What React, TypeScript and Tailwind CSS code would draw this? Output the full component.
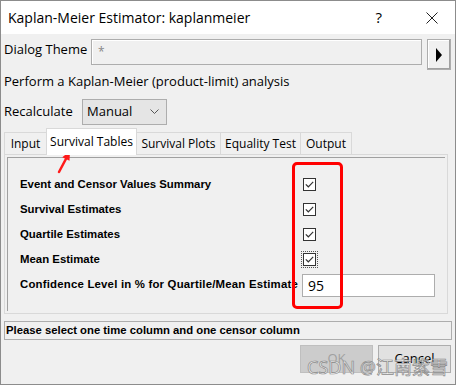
const Check = ({ focus }: { focus?: boolean }) => (
  <div className={focus ? "p-[1px] border border-dotted border-[#555]" : "p-[2px]"}>
    <div className="w-[13px] h-[13px] border border-[#333] bg-white flex items-center justify-center">
      <svg width="9" height="7" viewBox="0 0 9 7">
        <path d="M0.8 3.4 L3.3 5.8 L8.2 0.8" fill="none" stroke="#333" strokeWidth="1.2" />
      </svg>
    </div>
  </div>
);

const tabs = ["Input", "Survival Tables", "Survival Plots", "Equality Test", "Output"];
const tabWidths = ["w-[43px]", "w-[91px]", "w-[85px]", "w-[81px]", "w-[52px]"];

const rows = ["Event and Censor Values Summary", "Survival Estimates", "Quartile Estimates", "Mean Estimate"];

export default function App() {
  return (
    <div className="w-[459px] h-[385px] bg-white relative overflow-hidden font-['Open_Sans',sans-serif] text-[#000] whitespace-nowrap">
      <div className="w-[456px] h-[385px] border border-[#8c8c8c] bg-[#f0f0f0] flex flex-col">
        {/* title bar */}
        <div className="h-[33px] bg-white flex items-center pl-[7px] shrink-0">
          <span className="text-[14px]">Kaplan-Meier Estimator: kaplanmeier</span>
          <span className="ml-auto text-[15px] mr-[44px]">?</span>
          <svg width="12" height="12" viewBox="0 0 12 12" className="mr-[17px]">
            <path d="M0.5 0.5 L11.5 11.5 M11.5 0.5 L0.5 11.5" stroke="#222" strokeWidth="1" />
          </svg>
        </div>

        {/* dialog theme */}
        <div className="mt-[5px] h-[31px] flex items-start pl-[3px] shrink-0">
          <span className="w-[87px] text-[13px] leading-[20px]">Dialog Theme</span>
          <div className="w-[331px] h-[26px] border border-[#adadad] shadow-[inset_1px_1px_0_#fff] flex items-center pl-[6px] text-[12px] text-[#888]">
            *
          </div>
          <div className="ml-[5px] w-[24px] h-[31px] border border-[#adadad] bg-[#f0f0f0] shadow-[inset_-1px_-1px_0_#a0a0a0,inset_1px_1px_0_#fff] flex items-center justify-center">
            <svg width="8" height="14" viewBox="0 0 8 14">
              <path d="M1 0 L7 7 L1 14 Z" fill="#000" />
            </svg>
          </div>
        </div>

        <div className="h-[24px] flex items-center pl-[3px] text-[13px] shrink-0">
          Perform a Kaplan-Meier (product-limit) analysis
        </div>

        {/* recalculate */}
        <div className="mt-[5px] h-[26px] flex items-center pl-[3px] shrink-0">
          <span className="w-[78px] text-[13px]">Recalculate</span>
          <div className="w-[85px] h-[26px] border border-[#adadad] bg-[#e5e5e5] flex items-center pl-[4px] text-[13px]">
            Manual
            <svg width="9" height="6" viewBox="0 0 9 6" className="ml-auto mr-[7px]">
              <path d="M0.5 0.5 L4.5 4.5 L8.5 0.5" fill="none" stroke="#555" strokeWidth="1" />
            </svg>
          </div>
        </div>

        {/* tabs */}
        <div className="mt-[3px] h-[26px] flex items-end pl-[3px] relative z-10 shrink-0">
          {tabs.map((t, i) => (
            <div
              key={t}
              className={
                i === 1
                  ? `${tabWidths[i]} h-[27px] -mb-[1px] -ml-[1px] bg-white border border-b-0 border-[#d9d9d9] flex items-center justify-center text-[12px]`
                  : `${tabWidths[i]} h-[22px] bg-[#f0f0f0] border border-b-0 border-[#d9d9d9] -ml-[1px] first:ml-0 flex items-center justify-center text-[12px]`
              }
            >
              {t}
            </div>
          ))}
        </div>

        {/* panel */}
        <div className="ml-[3px] w-[444px] h-[160px] border border-[#d9d9d9] p-[2px] shrink-0">
          <div className="h-full border-l border-t border-[#a0a0a0] pt-[14px] pl-[12px] font-['Liberation_Sans',sans-serif] font-bold text-[11.4px]">
            {rows.map((r, i) => (
              <div key={r} className="h-[25px] flex items-center">
                <span className="w-[281px]">{r}</span>
                <Check focus={i === 3} />
              </div>
            ))}
            <div className="h-[25px] flex items-end">
              <span className="w-[282px] overflow-hidden pb-[4px] tracking-[0.2px]">
                Confidence Level in % for Quartile/Mean Estimate
              </span>
              <div className="w-[133px] h-[23px] border border-[#adadad] bg-white flex items-center pl-[5px] font-['Open_Sans',sans-serif] font-normal text-[14px]">
                95
              </div>
            </div>
          </div>
        </div>

        {/* status */}
        <div className="mt-[7px] ml-[3px] w-[448px] h-[19px] border border-[#adadad] flex items-center pl-[1px] font-['Liberation_Sans',sans-serif] font-bold text-[11.3px] shrink-0">
          Please select one time column and one censor column
        </div>

        {/* buttons */}
        <div className="mt-[5px] h-[28px] flex justify-end gap-[5px] pr-[4px] shrink-0">
          <div className="w-[73px] h-[28px] bg-[#cccccc] border border-[#bfbfbf] flex items-center justify-center text-[13px] text-[#a0a0a0]">
            OK
          </div>
          <div className="w-[73px] h-[28px] bg-[#e1e1e1] border border-[#adadad] flex items-center justify-center text-[13px]">
            Cancel
          </div>
        </div>
      </div>

      {/* annotations */}
      <div className="absolute left-[292px] top-[162px] w-[51px] h-[147px] border-[3px] border-[#ff0000] rounded-[5px]" />
      <svg className="absolute left-[52px] top-[148px]" width="24" height="28" viewBox="0 0 24 28">
        <path d="M7 24 L13.9 11" stroke="#ff1a1a" strokeWidth="2.5" strokeLinecap="round" />
        <path d="M18 3 L17.5 12.8 L10.3 9.2 Z" fill="#ff1a1a" />
      </svg>
      <div className="absolute left-[307px] top-[354px] text-[18px] leading-[26px] text-white/70 [-webkit-text-stroke:0.7px_#8a8a8a] font-['Noto_Sans','Noto_Sans_CJK_SC',sans-serif]">
        CSDN @江南紫雪
      </div>
    </div>
  );
}
